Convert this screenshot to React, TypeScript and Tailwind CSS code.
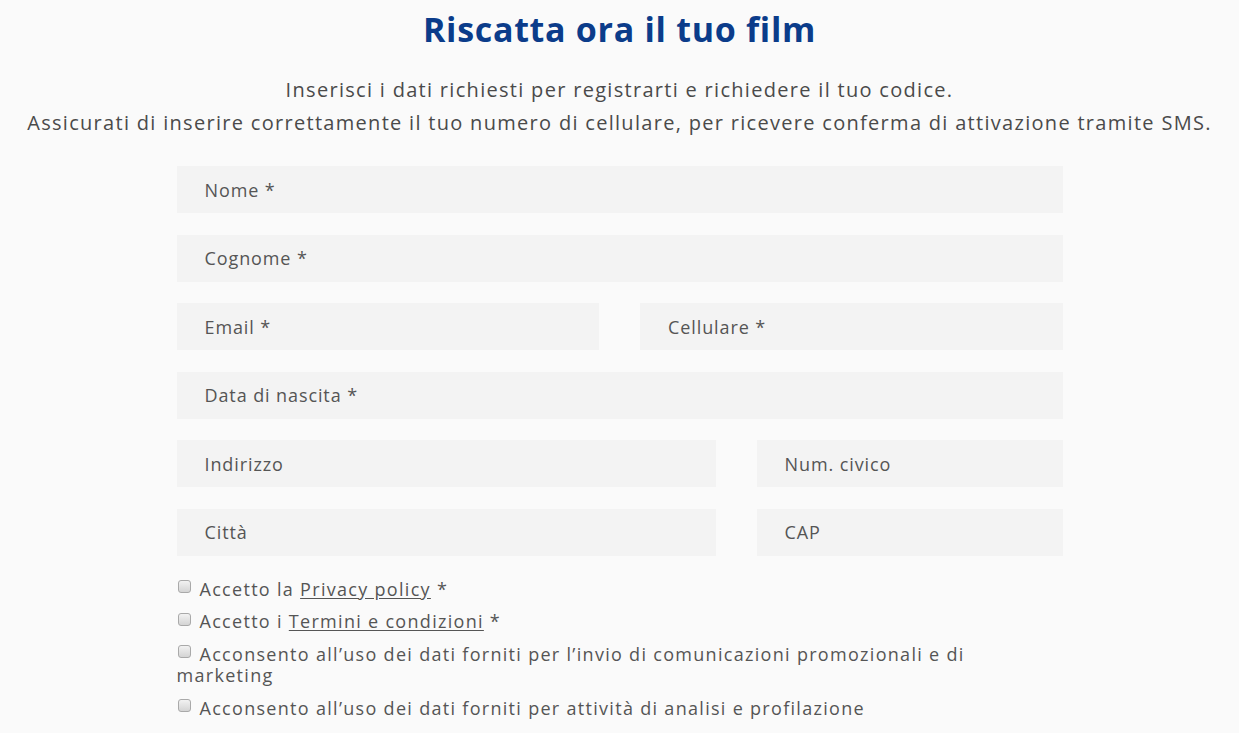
import { useState } from "react";

type Field = { name: string; label: string };

// righe del form: ogni riga è una griglia con le sue colonne
const rows: { cols: string; fields: Field[] }[] = [
  { cols: "grid-cols-1", fields: [{ name: "nome", label: "Nome *" }] },
  { cols: "grid-cols-1", fields: [{ name: "cognome", label: "Cognome *" }] },
  {
    cols: "grid-cols-2 gap-x-[41px]",
    fields: [
      { name: "email", label: "Email *" },
      { name: "cellulare", label: "Cellulare *" },
    ],
  },
  { cols: "grid-cols-1", fields: [{ name: "nascita", label: "Data di nascita *" }] },
  {
    cols: "grid-cols-[539px_1fr] gap-x-[41px]",
    fields: [
      { name: "indirizzo", label: "Indirizzo" },
      { name: "civico", label: "Num. civico" },
    ],
  },
  {
    cols: "grid-cols-[539px_1fr] gap-x-[41px]",
    fields: [
      { name: "citta", label: "Città" },
      { name: "cap", label: "CAP" },
    ],
  },
];

function Checkbox({ checked, onChange }: { checked: boolean; onChange: () => void }) {
  return (
    <input
      type="checkbox"
      checked={checked}
      onChange={onChange}
      className="mr-[9px] ml-px h-[13px] w-[13px] translate-y-[-4px] appearance-none rounded-[3px] border border-[#a9a9a9] bg-gradient-to-b from-[#f2f2f2] to-[#d4d4d4] align-middle checked:bg-[#0b3c8a]"
    />
  );
}

export default function App() {
  const [checks, setChecks] = useState([false, false, false, false]);
  const toggle = (i: number) => setChecks(checks.map((c, j) => (j === i ? !c : c)));

  return (
    <div
      className="min-h-screen bg-[#fafafa] text-[#444]"
      style={{ fontFamily: '"Open Sans", "Liberation Sans", sans-serif' }}
    >
      <h1 className="pt-[8px] text-center text-[34px] font-bold leading-[42px] tracking-[0.7px] text-[#0b3c8a]">
        Riscatta ora il tuo film
      </h1>

      <p className="mt-[23px] text-center text-[20px] leading-[33px] tracking-[1.3px] text-[#4a4a4a]">
        Inserisci i dati richiesti per registrarti e richiedere il tuo codice.
        <br />
        Assicurati di inserire correttamente il tuo numero di cellulare, per ricevere conferma di attivazione tramite SMS.
      </p>

      <form className="mx-auto mt-[27px] flex w-[886px] flex-col gap-[21.6px]">
        {rows.map((row, i) => (
          <div key={i} className={`grid ${row.cols}`}>
            {row.fields.map((f) => (
              <input
                key={f.name}
                name={f.name}
                placeholder={f.label}
                className="h-[47px] w-full bg-[#f3f3f3] px-[28px] text-[18px] tracking-[0.9px] text-[#444] outline-none placeholder:text-[#555]"
              />
            ))}
          </div>
        ))}

        <div className="mt-[1px] flex flex-col gap-[11px] pr-[10px] text-[18px] leading-[21.5px] tracking-[1.3px] text-[#555]">
          <label className="block">
            <Checkbox checked={checks[0]} onChange={() => toggle(0)} />
            Accetto la <a className="underline underline-offset-2">Privacy policy</a> *
          </label>
          <label className="block">
            <Checkbox checked={checks[1]} onChange={() => toggle(1)} />
            Accetto i <a className="underline underline-offset-2">Termini e condizioni</a> *
          </label>
          <label className="block">
            <Checkbox checked={checks[2]} onChange={() => toggle(2)} />
            Acconsento all’uso dei dati forniti per l’invio di comunicazioni promozionali e di marketing
          </label>
          <label className="block">
            <Checkbox checked={checks[3]} onChange={() => toggle(3)} />
            Acconsento all’uso dei dati forniti per attività di analisi e profilazione
          </label>
        </div>
      </form>
    </div>
  );
}
